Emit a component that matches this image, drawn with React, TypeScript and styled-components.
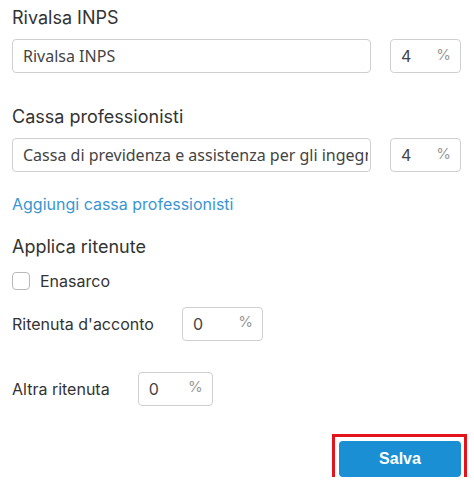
import styled, { createGlobalStyle } from "styled-components";

const GlobalStyle = createGlobalStyle`
  body {
    margin: 0;
    background: #ffffff;
    font-family: Inter, "Noto Sans", sans-serif;
    color: #333333;
  }
`;

const Page = styled.div`
  width: 474px;
  box-sizing: border-box;
  padding: 6px 13px 0 12px;
  display: flex;
  flex-direction: column;
`;

const SectionTitle = styled.div<{ $top?: number }>`
  font-size: 18px;
  line-height: 24px;
  color: #333333;
  margin-top: ${({ $top }) => $top ?? 0}px;
  margin-bottom: 9px;
`;

const InputRow = styled.div`
  display: flex;
  gap: 19px;
`;

const TextInput = styled.input`
  flex: 1;
  min-width: 0;
  height: 34px;
  box-sizing: border-box;
  border: 1px solid #cfcfcf;
  border-radius: 4px;
  padding: 0 2px 0 10px;
  margin: 0;
  font-family: "Noto Sans", "Open Sans", sans-serif;
  font-size: 16px;
  color: #444444;
  background: #ffffff;
  outline: none;
`;

const PercentField = styled.label<{ $width: number }>`
  width: ${({ $width }) => $width}px;
  height: 34px;
  box-sizing: border-box;
  border: 1px solid #cfcfcf;
  border-radius: 4px;
  padding: 0 9px 0 10px;
  display: flex;
  align-items: center;
  flex-shrink: 0;
`;

const PercentInput = styled.input`
  flex: 1;
  min-width: 0;
  border: none;
  padding: 0;
  margin: 0;
  outline: none;
  background: transparent;
  font-family: Inter, "Noto Sans", sans-serif;
  font-size: 16px;
  color: #444444;
`;

const Suffix = styled.span`
  color: #9a9a9a;
  font-size: 15px;
  margin-top: -4px;
`;

const AddLink = styled.a`
  margin-top: 22px;
  font-size: 16px;
  line-height: 20px;
  color: #3a96d2;
  text-decoration: none;
  cursor: pointer;
  align-self: flex-start;
`;

const CheckRow = styled.label`
  display: flex;
  align-items: center;
  gap: 10px;
  font-size: 16px;
  line-height: 20px;
  margin-top: 3px;
`;

const CheckBox = styled.span`
  width: 18px;
  height: 18px;
  box-sizing: border-box;
  border: 1px solid #b8b8b8;
  border-radius: 4px;
  background: #ffffff;
`;

const InlineRow = styled.div<{ $top: number }>`
  display: flex;
  align-items: center;
  gap: 28px;
  margin-top: ${({ $top }) => $top}px;
  font-size: 16px;
  line-height: 20px;
`;

const Footer = styled.div`
  display: flex;
  justify-content: flex-end;
  margin-top: 35px;
`;

const SaveButton = styled.button`
  position: relative;
  width: 122px;
  height: 36px;
  border: none;
  border-radius: 4px;
  background: #1a8fd4;
  color: #ffffff;
  font-family: "Liberation Sans", Arial, sans-serif;
  font-weight: 700;
  font-size: 16px;
  cursor: pointer;

  /* highlight frame drawn over the page */
  &::after {
    content: "";
    position: absolute;
    inset: -7px -6px -7px -7px;
    border: 3px solid #e3131b;
    pointer-events: none;
  }
`;

export default function App() {
  return (
    <>
      <GlobalStyle />
      <Page>
        <SectionTitle>Rivalsa INPS</SectionTitle>
        <InputRow>
          <TextInput defaultValue="Rivalsa INPS" />
          <PercentField $width={71}>
            <PercentInput defaultValue="4" />
            <Suffix>%</Suffix>
          </PercentField>
        </InputRow>

        <SectionTitle $top={32}>Cassa professionisti</SectionTitle>
        <InputRow>
          <TextInput defaultValue="Cassa di previdenza e assistenza per gli ingegneri ed architetti liberi professionisti" />
          <PercentField $width={71}>
            <PercentInput defaultValue="4" />
            <Suffix>%</Suffix>
          </PercentField>
        </InputRow>

        <AddLink>Aggiungi cassa professionisti</AddLink>

        <SectionTitle $top={21}>Applica ritenute</SectionTitle>
        <CheckRow>
          <CheckBox />
          Enasarco
        </CheckRow>

        <InlineRow $top={16}>
          Ritenuta d'acconto
          <PercentField $width={81}>
            <PercentInput defaultValue="0" />
            <Suffix>%</Suffix>
          </PercentField>
        </InlineRow>

        <InlineRow $top={31}>
          Altra ritenuta
          <PercentField $width={75}>
            <PercentInput defaultValue="0" />
            <Suffix>%</Suffix>
          </PercentField>
        </InlineRow>

        <Footer>
          <SaveButton>Salva</SaveButton>
        </Footer>
      </Page>
    </>
  );
}
